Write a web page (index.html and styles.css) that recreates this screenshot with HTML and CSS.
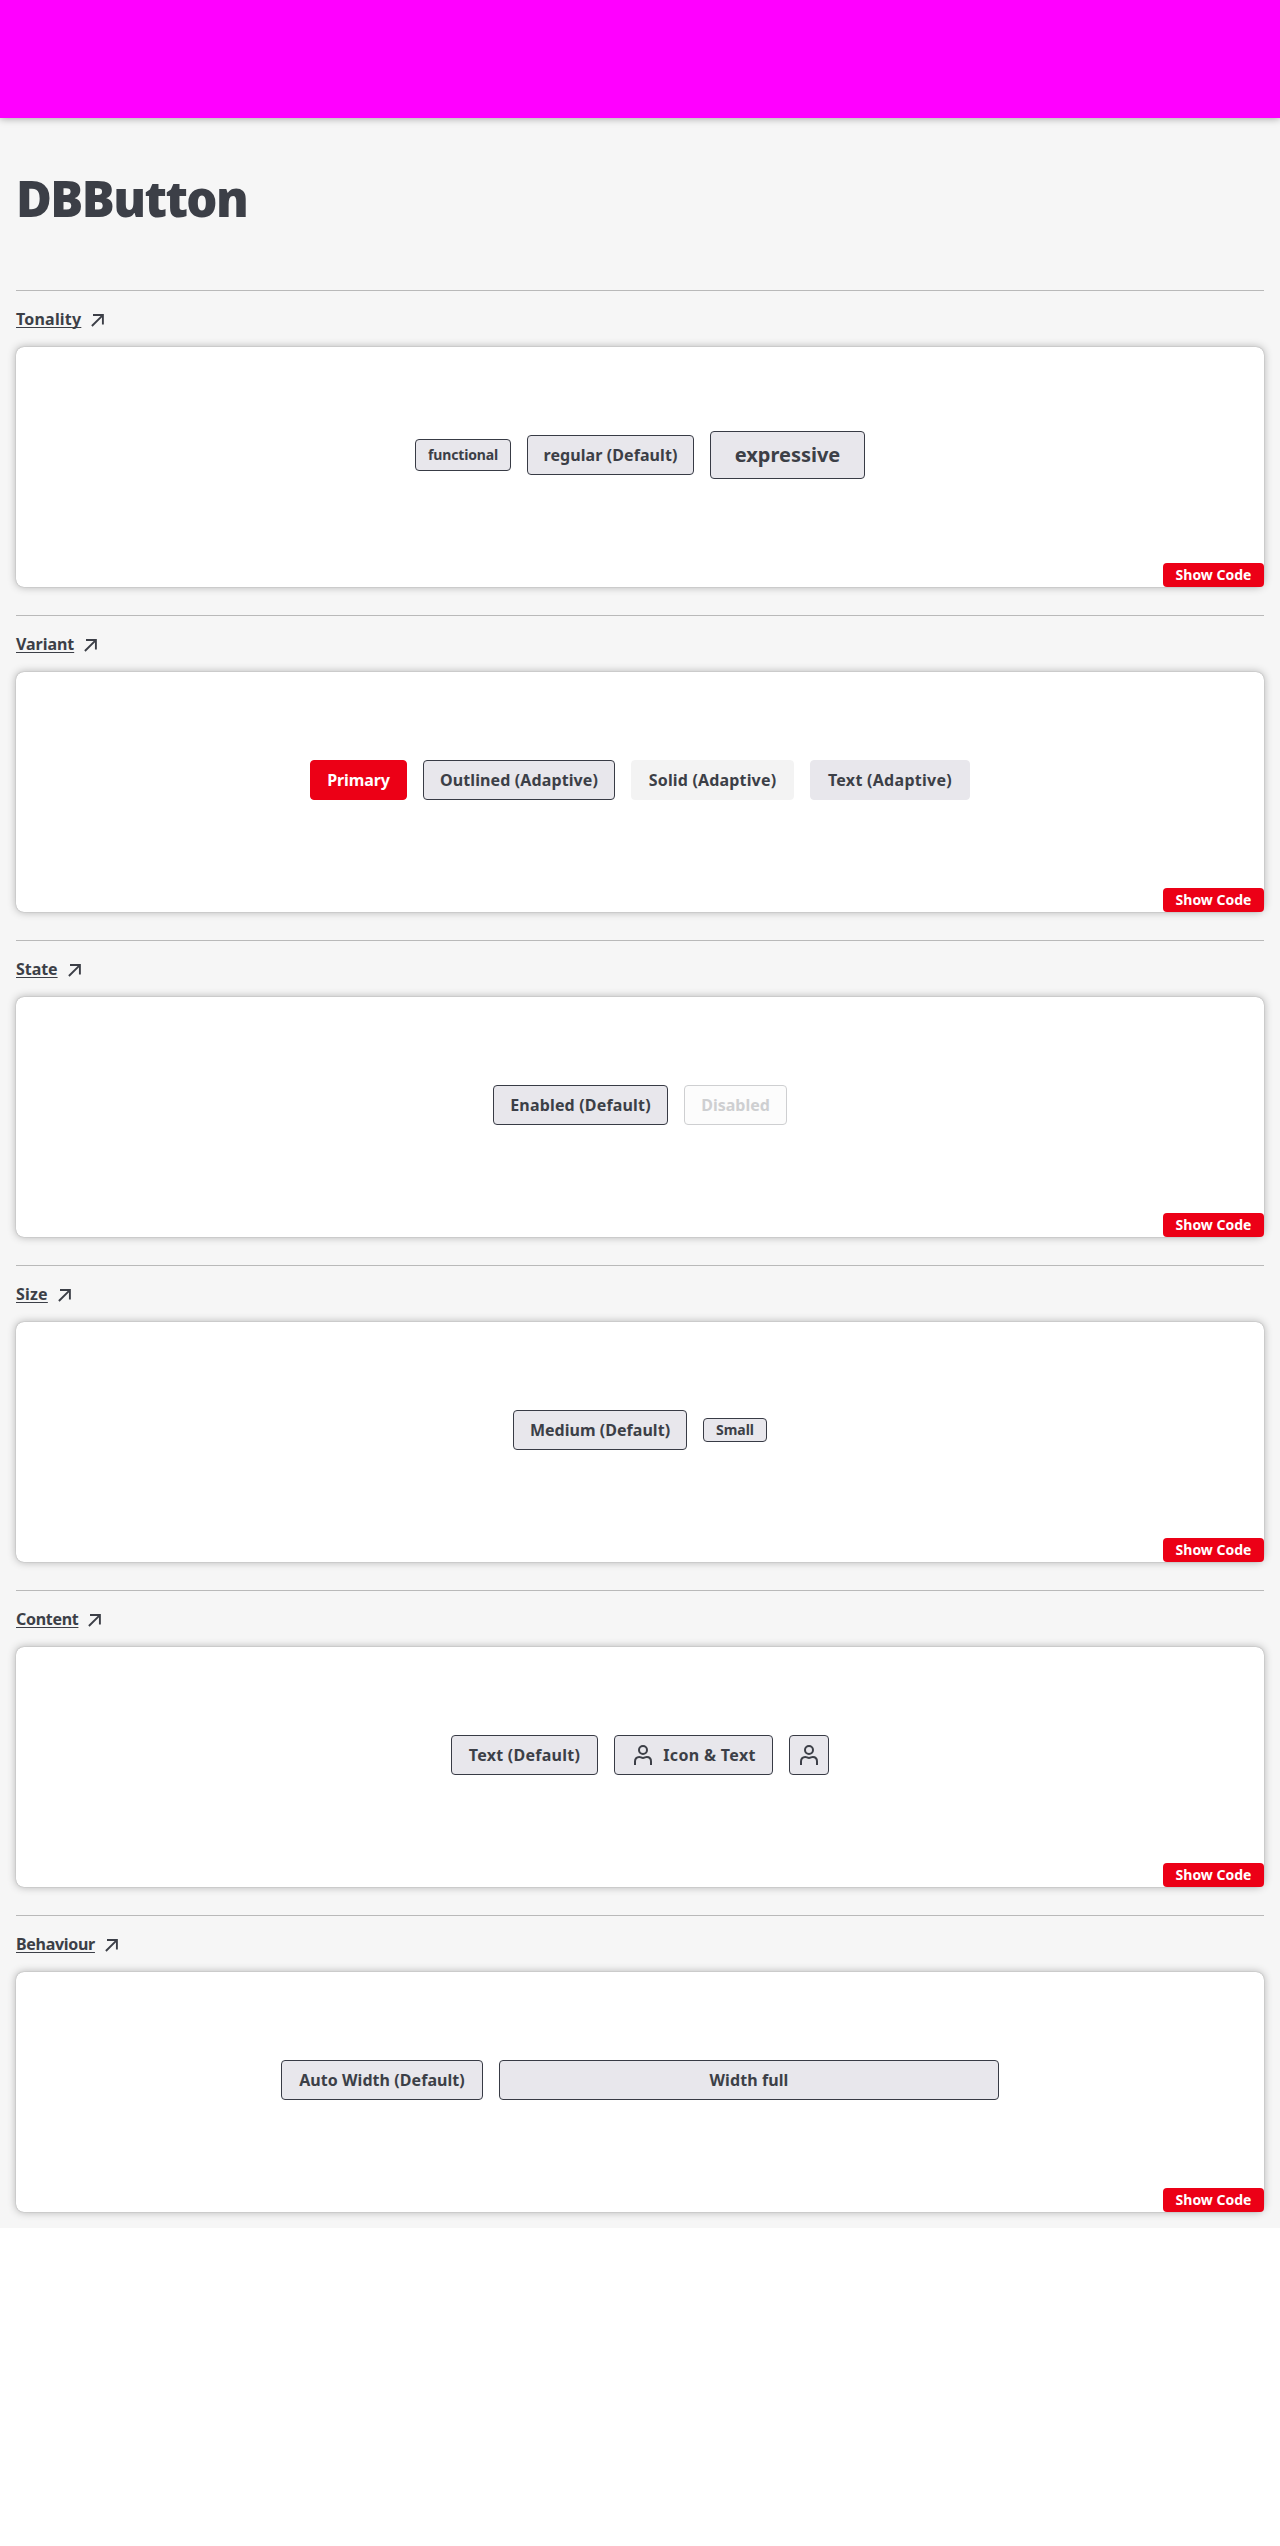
FILE: index.html
```html
<!DOCTYPE html>
<html lang="en">
<head>
<meta charset="utf-8">
<title>DBButton</title>
<link rel="stylesheet" href="styles.css">
</head>
<body>
<svg class="defs" aria-hidden="true">
  <symbol id="arrow" viewBox="0 0 20 20"><path d="M5 5h9.900v9.600M14.600 5.300 3.900 16" fill="none" stroke="currentColor" stroke-width="1.900"/></symbol>
  <symbol id="person" viewBox="0 0 24 24"><circle cx="12" cy="7" r="4" fill="none" stroke="currentColor" stroke-width="2"/><path d="M4 22v-3.500c0-2.700 1.500-4.500 4.200-4.500 1.400 0 2.200.9 3.800.9s2.400-.9 3.800-.9c2.700 0 4.200 1.800 4.200 4.500v3.500" fill="none" stroke="currentColor" stroke-width="2"/></symbol>
</svg>
<header class="header"></header>
<main class="page">
  <h1 class="title">DBButton</h1>
  <section class="group">
    <a class="link"><span class="label spaced">Tonality</span><svg class="arrow"><use href="#arrow"/></svg></a>
    <div class="card">
      <button class="btn functional"><span>functional</span></button>
      <button class="btn regular"><span>regular (Default)</span></button>
      <button class="btn expressive"><span>expressive</span></button>
      <button class="code"><span>Show Code</span></button>
    </div>
  </section>
  <section class="group">
    <a class="link"><span class="label">Variant</span><svg class="arrow"><use href="#arrow"/></svg></a>
    <div class="card">
      <button class="btn primary"><span>Primary</span></button>
      <button class="btn outlined"><span>Outlined (Adaptive)</span></button>
      <button class="btn solid"><span>Solid (Adaptive)</span></button>
      <button class="btn text"><span>Text (Adaptive)</span></button>
      <button class="code"><span>Show Code</span></button>
    </div>
  </section>
  <section class="group">
    <a class="link"><span class="label">State</span><svg class="arrow"><use href="#arrow"/></svg></a>
    <div class="card">
      <button class="btn enabled"><span>Enabled (Default)</span></button>
      <button class="btn disabled" disabled><span>Disabled</span></button>
      <button class="code"><span>Show Code</span></button>
    </div>
  </section>
  <section class="group">
    <a class="link"><span class="label spaced">Size</span><svg class="arrow"><use href="#arrow"/></svg></a>
    <div class="card">
      <button class="btn medium"><span>Medium (Default)</span></button>
      <button class="btn small"><span>Small</span></button>
      <button class="code"><span>Show Code</span></button>
    </div>
  </section>
  <section class="group">
    <a class="link"><span class="label tight">Content</span><svg class="arrow"><use href="#arrow"/></svg></a>
    <div class="card">
      <button class="btn text-default"><span>Text (Default)</span></button>
      <button class="btn icon-text"><svg class="person"><use href="#person"/></svg><span>Icon &amp; Text</span></button>
      <button class="btn icon-only" aria-label="Profile"><svg class="person"><use href="#person"/></svg></button>
      <button class="code"><span>Show Code</span></button>
    </div>
  </section>
  <section class="group">
    <a class="link"><span class="label tight">Behaviour</span><svg class="arrow"><use href="#arrow"/></svg></a>
    <div class="card">
      <button class="btn auto"><span>Auto Width (Default)</span></button>
      <button class="btn full"><span>Width full</span></button>
      <button class="code"><span>Show Code</span></button>
    </div>
  </section>
</main>
</body>
</html>
```
FILE: styles.css
```css
* { box-sizing: border-box; }
body { margin: 0; background: #fff; color: #3c3f47; font-family: "Noto Sans", "Open Sans", sans-serif; }
.defs { display: none; }
.header { height: 118px; background: #f0f; box-shadow: 0 0 8px rgba(0,0,0,.4); position: relative; }
.page { height: 2110px; padding: 0 16px; background: #f6f6f6; }
.title { margin: 0; height: 172px; padding-top: 46px; font-size: 49px; line-height: 68px; font-weight: 900; letter-spacing: -1.6px; white-space: nowrap; }
.group { height: 325px; border-top: 1px solid #b9b9b9; }
.link { display: flex; height: 56px; padding-top: 16px; align-items: flex-start; gap: 7px; font-size: 16px; line-height: 24px; font-weight: 700; }
.label { text-decoration: underline; text-decoration-thickness: 1px; text-underline-offset: 2px; text-decoration-skip-ink: none; letter-spacing: -.05px; }
.label.spaced { letter-spacing: .2px; }
.label.tight { letter-spacing: -.3px; }
.arrow { width: 20px; height: 20px; margin-top: 3px; }
.card { position: relative; height: 240px; display: flex; align-items: center; justify-content: center; gap: 16px; padding-bottom: 24px; background: #fff; border-radius: 8px; box-shadow: 0 0 1px rgba(0,0,0,.4), 0 0 8px rgba(0,0,0,.3); }
.btn, .code { display: flex; align-items: center; justify-content: center; height: 40px; padding: 0; border: 1px solid #383b45; border-radius: 4px; background: #e8e7ec; color: #3c3f47; font: 700 16px/24px "Noto Sans", "Open Sans", sans-serif; white-space: nowrap; }
.code { position: absolute; right: 0; bottom: 0; width: 101px; height: 24px; background: #ec0016; border: 0; color: #fff; font-size: 14px; }
.functional { width: 96px; height: 32px; font-size: 14px; letter-spacing: -.15px; }
.regular { width: 167px; letter-spacing: .08px; }
.expressive { width: 155px; height: 48px; font-size: 20px; }
.primary { width: 97px; background: #ec0016; border-color: #ec0016; color: #fff; letter-spacing: -.1px; }
.outlined { width: 192px; letter-spacing: .12px; }
.solid { width: 163px; background: #f3f3f3; border-color: #f3f3f3; letter-spacing: .17px; }
.text { width: 160px; border-color: #e8e7ec; letter-spacing: .28px; }
.enabled { width: 175px; letter-spacing: .17px; }
.disabled { width: 103px; background: #fcfcfc; border-color: #cecfd1; color: #cecfd1; }
.medium { width: 174px; letter-spacing: .03px; }
.small { width: 64px; height: 24px; font-size: 14px; }
.text-default { width: 147px; letter-spacing: .27px; }
.icon-text { width: 159px; gap: 8px; letter-spacing: .35px; }
.icon-only { width: 40px; }
.auto { width: 202px; letter-spacing: .06px; }
.full { width: 500px; letter-spacing: .1px; }
.person { width: 24px; height: 24px; }
```
